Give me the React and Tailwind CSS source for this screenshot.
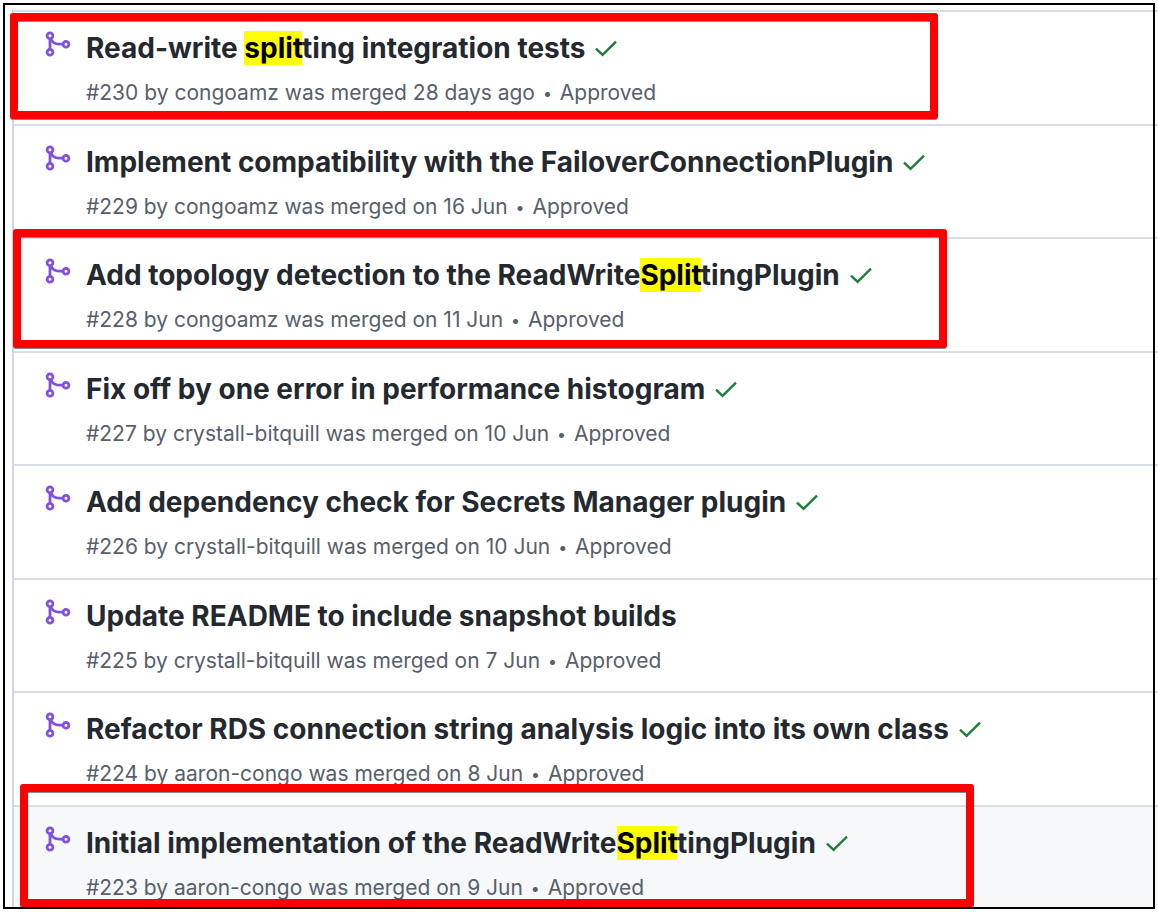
const pulls = [
  {
    number: 230,
    title: ["Read-write ", "split", "ting integration tests"],
    author: "congoamz",
    merged: "28 days ago",
    checks: true,
    box: "-left-1 top-px h-[106px] w-[928px]",
  },
  {
    number: 229,
    title: ["Implement compatibility with the FailoverConnectionPlugin"],
    author: "congoamz",
    merged: "on 16 Jun",
    checks: true,
  },
  {
    number: 228,
    title: ["Add topology detection to the ReadWrite", "Split", "tingPlugin"],
    author: "congoamz",
    merged: "on 11 Jun",
    checks: true,
    box: "-left-px -top-[10px] h-[119px] w-[934px]",
  },
  {
    number: 227,
    title: ["Fix off by one error in performance histogram"],
    author: "crystall-bitquill",
    merged: "on 10 Jun",
    checks: true,
  },
  {
    number: 226,
    title: ["Add dependency check for Secrets Manager plugin"],
    author: "crystall-bitquill",
    merged: "on 10 Jun",
    checks: true,
  },
  {
    number: 225,
    title: ["Update README to include snapshot builds"],
    author: "crystall-bitquill",
    merged: "on 7 Jun",
    checks: false,
  },
  {
    number: 224,
    title: ["Refactor RDS connection string analysis logic into its own class"],
    author: "aaron-congo",
    merged: "on 8 Jun",
    checks: true,
  },
  {
    number: 223,
    title: ["Initial implementation of the ReadWrite", "Split", "tingPlugin"],
    author: "aaron-congo",
    merged: "on 9 Jun",
    checks: true,
    active: true,
    box: "left-[6px] -top-[23px] h-[123px] w-[954px]",
  },
];

function MergeIcon() {
  return (
    <svg
      viewBox="0 0 26 26"
      className="mt-[19px] size-[26px] shrink-0 text-[#8250df]"
      fill="none"
      stroke="currentColor"
      strokeWidth="2.8"
      role="img"
      aria-label="Merged pull request"
    >
      <circle cx="5" cy="4.7" r="2.9" />
      <circle cx="5" cy="21.3" r="2.9" />
      <circle cx="21" cy="13.2" r="2.9" />
      <path d="M5 7.5v11M5.6 7.5c1.6 3.6 4.4 5.7 8.4 5.7h4.5" />
    </svg>
  );
}

function CheckIcon() {
  return (
    <svg
      viewBox="0 0 24 24"
      className="size-6 shrink-0 text-[#1a7f37]"
      fill="none"
      stroke="currentColor"
      strokeWidth="2.4"
      role="img"
      aria-label="Checks passed"
    >
      <path d="M2 12.6l6.6 6.2L22 5.6" />
    </svg>
  );
}

function PullRow({ pull }) {
  const [before, match, after] = pull.title;

  return (
    <li
      className={`relative flex gap-[15px] border-t-2 border-[#d8dee4] pl-[31px] odd:h-[114px] even:h-[113px] even:last:h-[104px] ${
        pull.active ? "bg-[#f6f8fa]" : ""
      }`}
    >
      <MergeIcon />
      <div className="min-w-0 pt-[18px]">
        <div className="flex items-center gap-[9px] whitespace-nowrap">
          <a href="#" className="text-[28px] leading-9 font-[650] text-[#24292f]">
            {before}
            {match && <mark className="bg-[#ffff00] text-black">{match}</mark>}
            {after}
          </a>
          {pull.checks && <CheckIcon />}
        </div>
        <p className="mt-[13px] text-[21px] leading-7 whitespace-nowrap text-[#57606a]">
          #{pull.number} by <a href="#">{pull.author}</a> was merged {pull.merged}{" "}
          <span className="mx-0.5 align-[1px] text-base leading-none">•</span>{" "}
          <a href="#">Approved</a>
        </p>
      </div>
      {pull.box && (
        <div
          className={`pointer-events-none absolute z-10 rounded-[3px] border-8 border-[#ff0000] drop-shadow-[0_1px_0_#8a8a8a] ${pull.box}`}
        />
      )}
    </li>
  );
}

export default function App() {
  return (
    <div className="relative overflow-hidden bg-white pt-[10px] pl-3 font-['Inter','Liberation_Sans',sans-serif]">
      <ul className="border-l-2 border-[#d0d7de]">
        {pulls.map((pull) => (
          <PullRow key={pull.number} pull={pull} />
        ))}
      </ul>
      <div className="pointer-events-none absolute top-[3px] right-[3px] bottom-0 left-[3px] z-20 border-2 border-black" />
    </div>
  );
}
